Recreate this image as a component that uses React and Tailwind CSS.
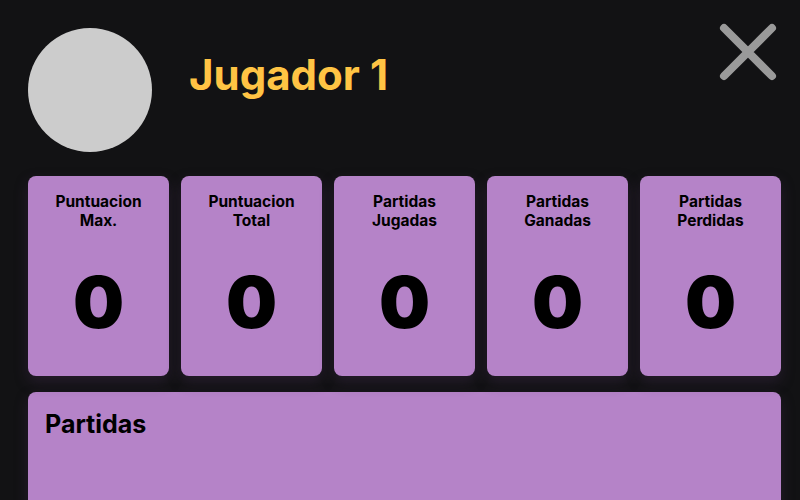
const stats = [
  { label: ["Puntuacion", "Max."], value: 0 },
  { label: ["Puntuacion", "Total"], value: 0 },
  { label: ["Partidas", "Jugadas"], value: 0 },
  { label: ["Partidas", "Ganadas"], value: 0 },
  { label: ["Partidas", "Perdidas"], value: 0 },
];

function StatCard({ label, value }) {
  return (
    <div className="flex h-[200px] flex-col items-center rounded-lg bg-[#b583c8] pt-[16px] text-black shadow-[0_6px_14px_rgba(60,40,70,0.45)]">
      <p className="text-center text-[15.5px] font-bold leading-[19px]">
        {label[0]}
        <br />
        {label[1]}
      </p>
      <p className="mt-[36px] text-[72px] font-black leading-none">{value}</p>
    </div>
  );
}

export default function App() {
  return (
    <div
      className="relative h-[500px] w-[800px] overflow-hidden bg-[#121214] pl-[28px] pr-[19px] pt-[28px]"
      style={{ fontFamily: "Inter, 'Noto Sans', sans-serif" }}
    >
      <button
        type="button"
        aria-label="Cerrar"
        className="absolute left-[716px] top-[20px] h-[64px] w-[64px]"
      >
        <svg viewBox="0 0 64 64" width="64" height="64">
          <path
            d="M8 8 L56 56 M56 8 L8 56"
            stroke="#9a9a9a"
            strokeWidth="8"
            strokeLinecap="round"
            fill="none"
          />
        </svg>
      </button>

      <header className="flex items-start">
        <div className="h-[124px] w-[124px] rounded-full bg-[#cccccc]" />
        <h1 className="ml-[37px] mt-[26px] text-[42px] font-bold leading-none text-[#ffc444]">
          Jugador 1
        </h1>
      </header>

      <section className="mt-[24px] grid grid-cols-5 gap-[12px]">
        {stats.map((stat) => (
          <StatCard key={stat.label.join(" ")} {...stat} />
        ))}
      </section>

      <section className="mt-[16px] h-[200px] rounded-lg bg-[#b583c8] px-[17px] pt-[16px] text-black shadow-[0_6px_14px_rgba(60,40,70,0.45)]">
        <h2 className="text-[25px] font-bold leading-[32px]">Partidas</h2>
      </section>
    </div>
  );
}
